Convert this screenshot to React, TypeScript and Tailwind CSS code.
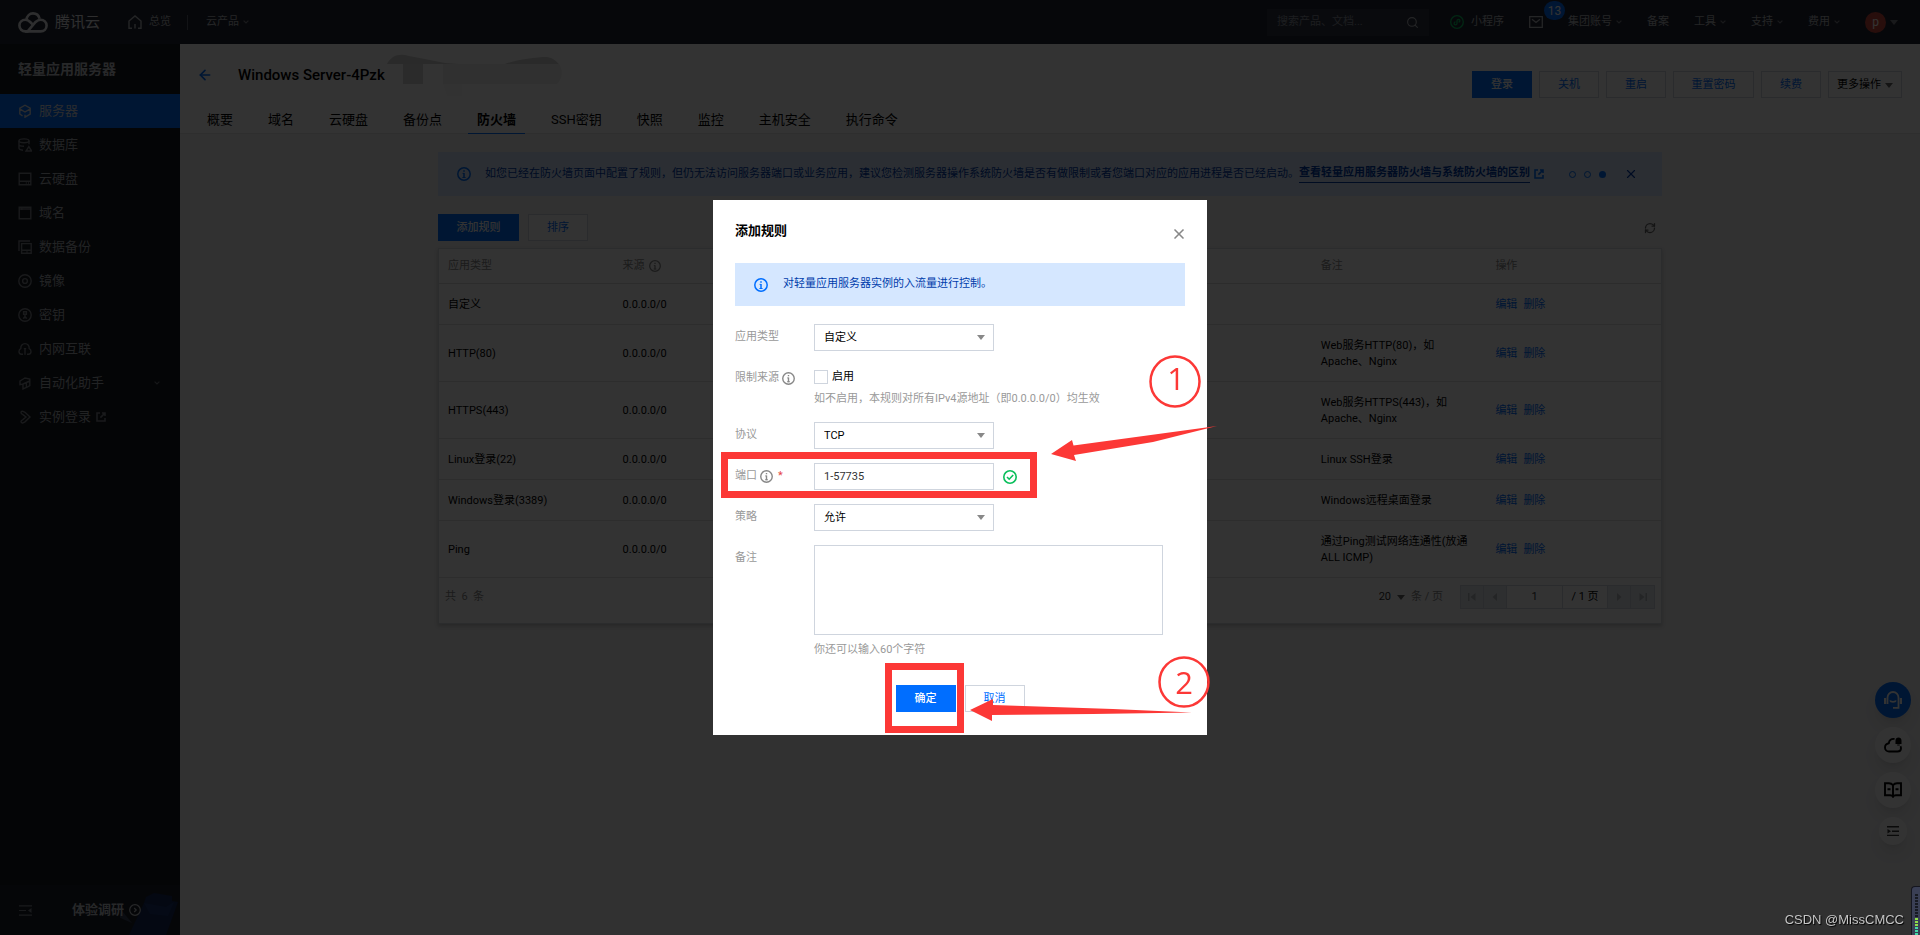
import type { ReactNode } from 'react'
import { ArrowLeft, RefreshCw, Search, X } from 'lucide-react'

const FONT = "font-['Roboto','Noto_Sans_CJK_SC',sans-serif]"

// 14x14 line icons for the sidebar
const menuIcons: Record<string, ReactNode> = {
  server: <path d="M4.500 11.800 1.800 10V4.200L7 1.200l5.200 3V10L7 13.200v-2.400M1.800 4.800 7 8l5.200-3.200" />,
  database: (
    <>
      <ellipse cx="6" cy="2.8" rx="5" ry="1.9" />
      <path d="M1 2.8v7.4c0 1 1.8 1.8 4 2M11 2.8v3.4M1 6.5c0 1 2.2 1.8 5 1.8M10.8 8.6 8 13h5.6z" />
    </>
  ),
  disk: <path d="M1.2 1.2h11.6v11.6H1.2zM1.2 9.2h11.6M7.8 11h1M10 11h1" />,
  domain: <path d="M1.2 1.2h11.6v11.6H1.2zM1.2 3h11.6M3.8 1.2V4" />,
  backup: <path d="M1 11V1h11M3.6 3.6h9.6v9.6H3.6zM3.6 10.2h9.6M8.5 11.8h1" />,
  image: (
    <>
      <circle cx="7" cy="7" r="6.2" />
      <circle cx="7" cy="7" r="2.4" />
    </>
  ),
  key: (
    <>
      <circle cx="7" cy="7" r="6.2" />
      <path d="M5.6 3.8h2.8v2.400H5.600zM7 6.400v4.200M5.200 10.600 7 8.400l1.800 2.200" />
    </>
  ),
  network: <path d="M5 12.2H3.4C1.8 12 1 10.8 1 9.4 1 8 1.8 7 2.8 6.6 2.6 3.6 4.4 1.6 7 1.6s4.4 2 4.2 5c1 .4 1.8 1.4 1.8 2.8 0 1.4-.8 2.6-2.4 2.8H9M7 12.8V7M5.8 6.6h2.4" />,
  auto: <path d="M2 5l5-3 4.8 1v6.6L9.6 11 5 13V8L2 8.6zM5 8l6.8-3M8.4 6.6v5" />,
  login: <path d="M3 2.6c0-1 1-1.6 2-1.2l2 .9L12 7l-5 4.8-2 1c-1 .4-2-.2-2-1.2s.6-1.4 1.6-1.8L8 7 4.6 4.4C3.6 4 3 3.6 3 2.6z" />,
}

const menu = [
  { icon: 'server', name: '服务器' },
  { icon: 'database', name: '数据库' },
  { icon: 'disk', name: '云硬盘' },
  { icon: 'domain', name: '域名' },
  { icon: 'backup', name: '数据备份' },
  { icon: 'image', name: '镜像' },
  { icon: 'key', name: '密钥' },
  { icon: 'network', name: '内网互联' },
  { icon: 'auto', name: '自动化助手' },
  { icon: 'login', name: '实例登录' },
]

const tabs = ['概要', '域名', '云硬盘', '备份点', '防火墙', 'SSH密钥', '快照', '监控', '主机安全', '执行命令']

const rules = [
  { type: '自定义', protocol: 'TCP', port: '8888', note: '' },
  { type: 'HTTP(80)', protocol: 'TCP', port: '80', note: 'Web服务HTTP(80)，如\nApache、Nginx' },
  { type: 'HTTPS(443)', protocol: 'TCP', port: '443', note: 'Web服务HTTPS(443)，如\nApache、Nginx' },
  { type: 'Linux登录(22)', protocol: 'TCP', port: '22', note: 'Linux SSH登录' },
  { type: 'Windows登录(3389)', protocol: 'TCP', port: '3389', note: 'Windows远程桌面登录' },
  { type: 'Ping', protocol: 'ICMP', port: 'ALL', note: '通过Ping测试网络连通性(放通\nALL ICMP)' },
]

const InfoIcon = ({ className = '' }: { className?: string }) => (
  <svg viewBox="0 0 14 14" className={`shrink-0 ${className}`} fill="none" stroke="currentColor" strokeWidth="1.5">
    <circle cx="7" cy="7" r="6.2" />
    <path d="M7 3.2v1.5M7 6v5" />
    <path d="M5.6 6.4H7M5.4 10.5h3.2" strokeWidth="1" />
  </svg>
)

const Chevron = ({ className = '' }: { className?: string }) => (
  <svg viewBox="0 0 6 4" className={`h-1 w-1.5 shrink-0 opacity-60 ${className}`} fill="none" stroke="currentColor" strokeWidth="1.2">
    <path d="M.6.6 3 3 5.4.6" />
  </svg>
)

const Caret = ({ className = '' }: { className?: string }) => (
  <svg viewBox="0 0 8 5" className={`h-[5px] w-2 shrink-0 ${className}`} fill="currentColor">
    <path d="M0 0h8L4 5z" />
  </svg>
)

const ExternalIcon = ({ className = '' }: { className?: string }) => (
  <svg viewBox="0 0 10 10" className={`h-[10px] w-[10px] shrink-0 ${className}`} fill="none" stroke="currentColor" strokeWidth="1.6">
    <path d="M4 1H1v8h8V6M6 1h3v3M9 1 4.4 5.6" />
  </svg>
)

const TopBar = () => (
  <header className="flex h-11 shrink-0 items-center bg-[#222634] pl-[18px] pr-[22px] text-[#b4b7bd]">
    <svg viewBox="0 0 30 21" className="h-[21px] w-[30px]" fill="none" stroke="#e4e6ea" strokeWidth="2.6">
      <path d="M8.5 7.6C9 4 11.6 1.4 15 1.4c3.2 0 5.8 2.2 6.6 5.4" />
      <path d="M10.5 19.4H7.4C4 19.4 1.4 17 1.4 13.6S4 7.8 7.4 7.8c2 0 3.4.8 4.8 2.2l2.6 2.6" />
      <path d="M9.6 19.4h13c3.4 0 6-2.4 6-5.8s-2.6-5.8-6-5.8c-2 0-3.6.8-5 2.2z" />
    </svg>
    <span className="ml-[7px] text-[15px] text-[#e4e6ea]">腾讯云</span>
    <a href="#" className="ml-7 flex items-center gap-[7px]">
      <svg viewBox="0 0 14 14" className="h-[14px] w-[14px]" fill="none" stroke="currentColor" strokeWidth="1.4">
        <path d="M4 13.3H1V6l6-5 6 5v7.3h-3M7 13.6V9" />
      </svg>
      总览
    </a>
    <span className="ml-4 h-[15px] w-px bg-[#5a6070]" />
    <button className="ml-[18px] flex items-center gap-1">
      云产品
      <Chevron />
    </button>
    <div className="ml-auto flex items-center gap-[25px]">
      <label className="-mr-1 flex h-[27px] w-[162px] items-center justify-between bg-[#2f3543] px-2.5">
        <input aria-label="搜索" placeholder="搜索产品、文档..." className="w-28 bg-transparent placeholder:text-[#8b909c]" />
        <Search className="h-[13px] w-[13px]" />
      </label>
      <a href="#" className="flex items-center gap-[7px]">
        <svg viewBox="0 0 14 14" className="h-[14px] w-[14px]" fill="none" stroke="#07c160" strokeWidth="1.3">
          <circle cx="7" cy="7" r="6.3" />
          <path d="M8.6 7.2c1.6-.4 1.8-2.8 0-2.9C7.400 4.300 7 5 7 6v2.200c0 1-.6 1.600-1.600 1.600-1.800-.2-1.600-2.500 0-2.900" />
        </svg>
        小程序
      </a>
      <button aria-label="消息" className="relative">
        <svg viewBox="0 0 14 12" className="h-3 w-[14px]" fill="none" stroke="currentColor" strokeWidth="1.3">
          <path d="M.7.7h12.600v10.600H.7zM3 3.200l4 3.300 4-3.300" />
        </svg>
        <span className="absolute -top-[15px] left-[15px] flex h-[19px] w-[21px] items-center justify-center rounded-full bg-[#006eff] text-xs text-white">13</span>
      </button>
      <button className="flex items-center gap-1">集团账号 <Chevron /></button>
      <button>备案</button>
      <button className="flex items-center gap-1">工具 <Chevron /></button>
      <button className="flex items-center gap-1">支持 <Chevron /></button>
      <button className="flex items-center gap-1">费用 <Chevron /></button>
      <button className="flex items-center gap-1">
        <span className="flex h-[21px] w-[21px] items-center justify-center rounded-full bg-[#c9473d] text-xs text-white">p</span>
        <Caret className="opacity-60" />
      </button>
    </div>
  </header>
)

const Sidebar = () => (
  <aside className="flex w-[180px] shrink-0 flex-col bg-[#15191f] text-[13px] text-[#a9adb4]">
    <h2 className="flex h-[50px] items-center pl-[18px] text-sm font-bold text-[#c3c6cb]">轻量应用服务器</h2>
    <nav>
      {menu.map(({ icon, name }, i) => (
        <a
          key={name}
          href="#"
          className={`flex h-[34px] items-center pl-[18px] pr-5 ${i === 0 ? 'bg-[#006eff] text-[#d5dbe5]' : ''}`}
        >
          <svg viewBox="0 0 14 14" className={`h-[14px] w-[14px] shrink-0 ${i === 0 ? '' : 'opacity-70'}`} fill="none" stroke="currentColor" strokeWidth="1.4">
            {menuIcons[icon]}
          </svg>
          <span className="ml-[7px]">{name}</span>
          {icon === 'auto' && <Chevron className="ml-auto" />}
          {icon === 'login' && <ExternalIcon className="ml-[5px] opacity-70" />}
        </a>
      ))}
    </nav>
    <div className="relative mt-auto flex h-[50px] items-center overflow-hidden bg-[#1b1f2c] pl-[19px]">
      <svg viewBox="0 0 56 42" className="absolute bottom-0 right-0 h-[42px] w-[60px]">
        <path d="M24 4 32 0l18 3v5l6 1-12 33H7L22 10z" fill="#15295a" />
        <path d="M22 10 44 14l8-5-6 14-18-2z" fill="#1a3570" />
        <path d="M0 18l10 12-14-6z" fill="#39435c" />
      </svg>
      <svg viewBox="0 0 13 11" className="h-[11px] w-[13px] opacity-70" fill="none" stroke="currentColor" strokeWidth="1.2">
        <path d="M0 .8h13M0 5.500h7M0 10.200h13" />
        <path d="M12.500 3v5L9 5.500z" fill="currentColor" stroke="none" />
      </svg>
      <a href="#" className="relative ml-10 flex items-center gap-[5px] font-bold text-[#c3c6cb]">
        体验调研
        <svg viewBox="0 0 12 12" className="h-3 w-3" fill="none" stroke="currentColor" strokeWidth="1.2">
          <circle cx="6" cy="6" r="5.300" />
          <path d="M5.200 4 7.200 6l-2 2" />
        </svg>
      </a>
    </div>
  </aside>
)

const ActionButton = ({ children, primary, wide }: { children: ReactNode; primary?: boolean; wide?: boolean }) => (
  <button
    className={`flex h-[27px] items-center justify-center border pt-0.5 ${wide ? 'w-[81px]' : 'w-[60px]'} ${
      primary ? 'border-[#006eff] bg-[#006eff] font-medium text-white' : 'border-[#cfd5de] bg-white text-[#006eff]'
    }`}
  >
    {children}
  </button>
)

const InstanceHeader = () => (
  <div className="flex items-start justify-between border-b border-[#e5e5e5] bg-white">
    <div>
      <div className="flex h-[62px] items-center pl-[17px]">
        <button aria-label="返回" className="text-[#006eff]">
          <ArrowLeft className="h-4 w-4" strokeWidth={2.5} />
        </button>
        <h1 className="ml-[25px] text-[15px] font-medium text-black">Windows Server-4Pzk</h1>
        <svg viewBox="0 0 176 42" className="ml-0.5 h-[42px] w-[176px]">
          <path d="M0 10C4 2 12-1 22 2l16 3 20 4 14 1zM118 10c10-4 30-7 42-7 6 1 9 4 12 7z" fill="#d2d2d2" />
          <path d="M16 10h20v20H16z" fill="#d8d8d8" />
          <path d="M56 10h116c4 6 4 14-2 20H56z" fill="#f0f0ef" />
          <path d="M56 30h19v12H60z" fill="#fafafa" />
        </svg>
      </div>
      <nav className="flex h-[27px] gap-[17px] pl-[18px] text-[13px] text-black">
        {tabs.map((tab) => (
          <a
            key={tab}
            href="#"
            className={`flex h-7 items-center border-b px-[9px] ${tab === '防火墙' ? 'border-[#006eff] font-bold' : 'border-transparent'}`}
          >
            {tab}
          </a>
        ))}
      </nav>
    </div>
    <div className="mr-[18px] mt-[27px] flex gap-[7px]">
      <ActionButton primary>登录</ActionButton>
      <ActionButton>关机</ActionButton>
      <ActionButton>重启</ActionButton>
      <ActionButton wide>重置密码</ActionButton>
      <ActionButton>续费</ActionButton>
      <button className="flex h-[27px] w-[74px] items-center justify-center gap-1 border border-[#cfd5de] pt-0.5 text-black">
        更多操作
        <Caret className="text-[#666]" />
      </button>
    </div>
  </div>
)

const Notice = () => (
  <div className="flex h-11 items-center bg-[#d5e7ff] pl-[19px] pr-6 text-[#003cab]">
    <InfoIcon className="h-[14px] w-[14px] text-[#006eff]" />
    <p className="ml-[14px] flex items-center whitespace-nowrap">
      如您已经在防火墙页面中配置了规则，但仍无法访问服务器端口或业务应用，建议您检测服务器操作系统防火墙是否有做限制或者您端口对应的应用进程是否已经启动。
      <a href="#" className="border-b border-[#003cab] font-bold">查看轻量应用服务器防火墙与系统防火墙的区别</a>
      <ExternalIcon className="ml-1 text-[#006eff]" />
    </p>
    <div className="ml-auto flex items-center gap-2">
      <span className="h-[7px] w-[7px] rounded-full border border-[#006eff]" />
      <span className="h-[7px] w-[7px] rounded-full border border-[#006eff]" />
      <span className="h-[7px] w-[7px] rounded-full bg-[#006eff]" />
    </div>
    <button aria-label="关闭提示" className="ml-[18px]">
      <X className="h-[14px] w-[14px]" />
    </button>
  </div>
)

const PageButton = ({ label, d }: { label: string; d: string }) => (
  <button aria-label={label} className="flex w-[23px] items-center justify-center border-r border-[#cfd5de] bg-[#e6eaf0] text-[#b4b7bc] last:border-r-0">
    <svg viewBox="0 0 8 8" className="h-2 w-2" fill="currentColor">
      <path d={d} />
    </svg>
  </button>
)

const RuleTable = () => (
  <div className="mt-[7px] border border-[#d8dbe0] bg-white shadow-[0_2px_4px_rgba(0,0,0,0.2)]">
    <table className="w-full table-fixed text-left leading-4 text-black">
      <thead className="text-[#888]">
        <tr className="border-b border-[#dcdcdc]">
          {['应用类型', '来源', '协议', '端口', '策略', '备注', '操作'].map((head) => (
            <th key={head} className="px-[9px] py-[9px] font-normal">
              <span className="flex items-center gap-1">
                {head}
                {head === '来源' && <InfoIcon className="h-3 w-3" />}
              </span>
            </th>
          ))}
        </tr>
      </thead>
      <tbody>
        {rules.map((rule) => (
          <tr key={rule.type} className="border-b border-[#e0e0e0]">
            <td className="px-[9px] pb-[11px] pt-[13px]">{rule.type}</td>
            <td className="px-[9px] pb-[11px] pt-[13px]">0.0.0.0/0</td>
            <td className="px-[9px] pb-[11px] pt-[13px]">{rule.protocol}</td>
            <td className="px-[9px] pb-[11px] pt-[13px]">{rule.port}</td>
            <td className="px-[9px] pb-[11px] pt-[13px]">允许</td>
            <td className="whitespace-pre-line px-[9px] pb-[11px] pt-[13px]">{rule.note}</td>
            <td className="px-[9px] pb-[11px] pt-[13px] text-[#006eff]">
              <a href="#">编辑</a>
              <a href="#" className="ml-1.5">删除</a>
            </td>
          </tr>
        ))}
      </tbody>
    </table>
    <div className="flex items-start pb-[14px] pl-1.5 pr-1.5 pt-[7px] text-[#888]">
      <span className="leading-6">共&nbsp; 6 &nbsp;条</span>
      <button className="ml-auto flex h-6 items-center gap-1.5 text-[#333]">
        20 <Caret className="text-[#666]" />
      </button>
      <span className="ml-1.5 leading-6">条 / 页</span>
      <div className="ml-[17px] flex h-6 border border-[#cfd5de] text-[#333]">
        <PageButton label="首页" d="M0 0h1.500v8H0zM7.500 0v8L2.500 4z" />
        <PageButton label="上一页" d="M6 0v8L1.500 4z" />
        <input aria-label="页码" defaultValue="1" className="w-14 border-r border-[#cfd5de] text-center" />
        <span className="w-[45px] border-r border-[#cfd5de] text-center leading-[22px] text-black">/ 1 页</span>
        <PageButton label="下一页" d="M2 0v8l4.500-4z" />
        <PageButton label="末页" d="M6.500 0H8v8H6.500zM.5 0v8l5-4z" />
      </div>
    </div>
  </div>
)

const FloatTools = () => (
  <div className="fixed bottom-[90px] right-[9px] flex flex-col items-center gap-[9px] text-black">
    <button aria-label="在线客服" className="flex h-9 w-9 items-center justify-center rounded-full bg-[#006eff] text-white shadow-lg">
      <svg viewBox="0 0 18 18" className="h-[18px] w-[18px]" fill="none" stroke="currentColor" strokeWidth="1.800">
        <path d="M3.500 13V6.800C3.500 3.400 6 1 9 1s5.500 2.400 5.500 5.800V13M6 9.500c.8 1.800 5.200 1.800 6 0M14.500 13v3.800H9" />
        <path d="M1 7v6M17 7v6" strokeWidth="2.400" />
      </svg>
    </button>
    <button aria-label="云助手" className="flex h-9 w-9 items-center justify-center rounded-full bg-white shadow-lg">
      <svg viewBox="0 0 18 16" className="h-4 w-[18px]" fill="none" stroke="currentColor" strokeWidth="1.900">
        <path d="M10.500 2C7.500 1.400 5 3.400 4.800 6.200 2.600 6.600 1 8.200 1 10.400 1 12.800 2.800 14.500 5 14.500h8.500c2 0 3.500-1.300 3.500-3.300 0-.8-.2-1.400-.6-2" />
        <path d="M11.500 7V3.600c0-2 1.300-3.200 3-3.200s3 1.200 3 3.200V7zM13.200 7.600h2.600v1h-2.600z" fill="currentColor" stroke="none" />
      </svg>
    </button>
    <button aria-label="文档" className="flex h-9 w-9 items-center justify-center rounded-full bg-white shadow-lg">
      <svg viewBox="0 0 18 16" className="h-4 w-[18px]" fill="none" stroke="currentColor" strokeWidth="1.900">
        <path d="M9 3.200C8 1.800 6.800 1.200 5 1.200H1v12h5.200c1.400 0 2.200.4 2.800 1.400.6-1 1.400-1.400 2.800-1.400H17v-12h-4c-1.800 0-3 .6-4 2zM9 3v12.500M3.500 7.200h3M11.500 7.200h3" />
      </svg>
    </button>
    <button aria-label="展开" className="flex h-7 w-7 items-center justify-center rounded-full bg-white text-[#333] shadow-lg">
      <svg viewBox="0 0 12 10" className="h-[10px] w-3" fill="none" stroke="currentColor" strokeWidth="1.500">
        <path d="M0 .8h12M5 5.200h7M0 9.400h12" />
        <path d="M.5 3v4.400l3.500-2.200z" fill="currentColor" stroke="none" />
      </svg>
    </button>
  </div>
)

const FormRow = ({ label, id, info, required, children }: { label: string; id: string; info?: boolean; required?: boolean; children: ReactNode }) => (
  <div className="flex items-start">
    <div className="flex h-[26px] w-[79px] shrink-0 items-center gap-[3px] text-[#999]">
      <label htmlFor={id}>{label}</label>
      {info && <InfoIcon className="h-[13px] w-[13px] text-[#888]" />}
      {required && <span className="pl-0.5 text-[#e54545]">*</span>}
    </div>
    {children}
  </div>
)

const SelectBox = ({ id, value }: { id: string; value: string }) => (
  <div className="relative w-[180px] text-black">
    <select id={id} defaultValue={value} className="h-[27px] w-full appearance-none rounded-none border border-[#cfd5de] bg-white px-[9px] pt-0.5">
      <option>{value}</option>
    </select>
    <Caret className="pointer-events-none absolute right-[9px] top-[11px] text-[#888]" />
  </div>
)

// Red boxes, arrows and step numbers drawn over the dialog
const Marks = () => (
  <svg viewBox="0 0 494 535" className="pointer-events-none absolute left-0 top-0 h-[535px] w-[494px] overflow-visible" fill="none" stroke="#fc3836">
    <rect x="11.500" y="255.500" width="309" height="39" strokeWidth="7" />
    <rect x="175.500" y="466.500" width="72" height="63" strokeWidth="7" />
    <ellipse cx="462" cy="181.500" rx="24.500" ry="25" strokeWidth="2.500" />
    <circle cx="471" cy="482" r="24.500" strokeWidth="2.500" />
    <g fill="#fc3836" stroke="none">
      <path d="M338 254 359 240 360.500 245.500 504 226 440 242 361 255 363 261z" />
      <path d="M257 510 280 499V505L400 509 479 512.500 380 514 279 515V521z" />
      <text x="463" y="190" textAnchor="middle" fontSize="31" className="font-['Open_Sans',sans-serif]">1</text>
      <text x="471" y="494" textAnchor="middle" fontSize="31" className="font-['Open_Sans',sans-serif]">2</text>
    </g>
  </svg>
)

const RuleDialog = () => (
  <div role="dialog" aria-labelledby="dialog-title" className="relative w-[494px] bg-white px-[22px] pb-[23px] pt-[22px]">
    <div className="flex h-[41px] items-start justify-between">
      <h3 id="dialog-title" className="text-[13px] font-bold leading-[18px] text-black">添加规则</h3>
      <button aria-label="关闭" className="mt-1 text-[#888]">
        <X className="-mr-0.5 h-4 w-4" strokeWidth={2.5} />
      </button>
    </div>
    <div className="flex h-[43px] items-center bg-[#d5e7ff] pl-[19px] text-[#003cab]">
      <InfoIcon className="h-[14px] w-[14px] text-[#006eff]" />
      <p className="ml-[15px]">对轻量应用服务器实例的入流量进行控制。</p>
    </div>
    <form className="mt-[18px] flex flex-col gap-[14px]">
      <FormRow label="应用类型" id="app-type">
        <SelectBox id="app-type" value="自定义" />
      </FormRow>
      <FormRow label="限制来源" id="limit-source" info>
        <div>
          <div className="flex h-6 items-center gap-1 text-black">
            <input id="limit-source" type="checkbox" className="h-[14px] w-[14px] appearance-none border border-[#cfd5de]" />
            <label htmlFor="limit-source">启用</label>
          </div>
          <p className="leading-[19px] text-[#999]">如不启用，本规则对所有IPv4源地址（即0.0.0.0/0）均生效</p>
        </div>
      </FormRow>
      <FormRow label="协议" id="protocol">
        <SelectBox id="protocol" value="TCP" />
      </FormRow>
      <FormRow label="端口" id="port" info required>
        <div className="flex items-center gap-[9px]">
          <input id="port" defaultValue="1-57735" className="h-[27px] w-[180px] border border-[#cfd5de] px-[9px] text-[#333]" />
          <svg viewBox="0 0 14 14" className="h-[14px] w-[14px]" fill="none" stroke="#0abf5b" strokeWidth="1.600">
            <circle cx="7" cy="7" r="6.200" />
            <path d="M4 7l2.200 2.200L10.200 5" />
          </svg>
        </div>
      </FormRow>
      <FormRow label="策略" id="policy">
        <SelectBox id="policy" value="允许" />
      </FormRow>
      <FormRow label="备注" id="remark">
        <div>
          <textarea id="remark" className="block h-[90px] w-[349px] resize-none border border-[#cfd5de] p-2" />
          <p className="mt-[7px] leading-4 text-[#999]">你还可以输入60个字符</p>
        </div>
      </FormRow>
      <div className="mt-[13px] flex justify-center gap-[9px]">
        <ActionButton primary>确定</ActionButton>
        <ActionButton>取消</ActionButton>
      </div>
    </form>
    <Marks />
  </div>
)

export default function App() {
  return (
    <div className={`flex h-screen flex-col overflow-hidden text-[11px] ${FONT}`}>
      <TopBar />
      <div className="flex min-h-0 flex-1">
        <Sidebar />
        <main className="min-w-0 flex-1 bg-[#f2f2f3]">
          <InstanceHeader />
          <div className="mx-auto max-w-[1224px] pt-[18px]">
            <Notice />
            <div className="mt-[18px] flex items-center gap-[9px]">
              <ActionButton primary wide>添加规则</ActionButton>
              <ActionButton>排序</ActionButton>
              <button aria-label="刷新" className="ml-auto mr-1.5 text-[#666]">
                <RefreshCw className="h-3 w-3" strokeWidth={2.5} />
              </button>
            </div>
            <RuleTable />
          </div>
        </main>
      </div>
      <FloatTools />

      <div className="fixed inset-0 flex items-center justify-center bg-black/80">
        <RuleDialog />
      </div>

      <div className="fixed bottom-0 right-0 flex h-[49px] w-[9px] flex-col justify-end gap-px rounded-tl border-l border-t border-[#15161f] bg-[#3a3f55] pl-[3px] pr-0.5">
        {Array.from({ length: 14 }, (_, i) => (
          <span key={i} className={`h-0.5 ${i < 8 ? 'bg-[#171a22]' : i < 11 ? 'bg-[#8fdc4a]' : 'bg-[#45d6a8]'}`} />
        ))}
      </div>
      <span className="fixed bottom-1.5 right-4 font-['Liberation_Sans',sans-serif] text-[13px] text-[#c4c4c4] [text-shadow:1px_1px_1px_#000]">CSDN @MissCMCC</span>
    </div>
  )
}
